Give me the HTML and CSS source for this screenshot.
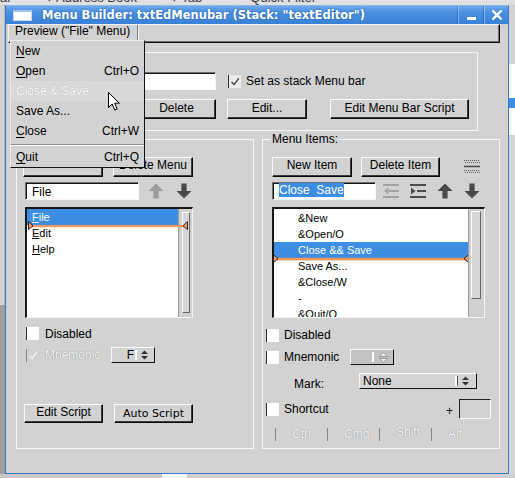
FILE: index.html
```html
<!DOCTYPE html>
<html lang="en">
<head>
<meta charset="utf-8">
<title>Menu Builder</title>
<link rel="stylesheet" href="styles.css">
</head>
<body>
<div class="desktop">

  <!-- application window sitting behind the dialog -->
  <div class="app-window">
    <div class="app-toolbar">
      <span class="t1">al</span>
      <span class="t2">&#9662; Address Book</span>
      <span class="t3">&#9662; Tab</span>
      <span class="t4">Quick Filter</span>
    </div>
    <div class="app-left">
      <div class="al-light"></div>
      <div class="al-dark"></div>
    </div>
    <div class="app-right">
      <div class="ar-gray"></div>
      <div class="ar-white"></div>
      <div class="ar-blue"></div>
      <div class="ar-white2"></div>
      <div class="ar-rest"></div>
    </div>
    <div class="app-bottom">
      <div class="ab-gray"></div>
      <div class="ab-white"></div>
      <div class="ab-rest"></div>
    </div>
  </div>

  <!-- Menu Builder dialog -->
  <div class="window">
    <div class="titlebar">
      <span class="win-icon"></span>
      <span class="win-title">Menu Builder: txtEdMenubar (Stack: "textEditor")</span>
      <span class="tb-btn tb-min"><svg width="9" height="18" viewBox="0 0 9 18"><rect x="0" y="11" width="9" height="3" fill="#fff"/></svg></span>
      <span class="tb-btn tb-close"><svg width="10" height="10" viewBox="0 0 10 10"><path d="M1.2 1.2L8.8 8.8M8.8 1.2L1.2 8.8" stroke="#fff" stroke-width="2.3" stroke-linecap="square"/></svg></span>
    </div>

    <div class="menubar"><span class="menubar-item">Preview ("File" Menu)</span></div>

    <div class="top-group">
      <div class="tg-row1">
        <span class="tg-label"></span>
        <span class="field tg-field"></span>
        <span class="check tg-check"><svg width="12" height="13" viewBox="0 0 12 13"><path d="M2.5 7L5 9.6L9.8 3.4" fill="none" stroke="#333" stroke-width="1.3"/></svg></span>
        <span class="check-label">Set as stack Menu bar</span>
      </div>
      <div class="tg-row2">
        <span class="btn btn-top b-new"></span>
        <span class="btn btn-top b-delete">Delete</span>
        <span class="btn btn-top b-edit">Edit...</span>
        <span class="btn btn-top b-script">Edit Menu Bar Script</span>
      </div>
    </div>

    <div class="columns">
      <!-- menus column -->
      <div class="group">
        <span class="group-label blank"></span>
        <div class="gl-btns">
          <span class="btn w80"></span>
          <span class="btn w80">Delete Menu</span>
        </div>
        <div class="gl-field-row">
          <span class="field gl-field">File</span>
          <svg class="icon gl-up" width="16" height="16" viewBox="0 0 16 16"><path d="M8 0.5L15.5 8H10.6V15.5H5.4V8H0.5Z" fill="#9c9c9c"/></svg>
          <svg class="icon gl-down" width="16" height="16" viewBox="0 0 16 16"><path d="M8 15.5L15.5 8H10.6V0.5H5.4V8H0.5Z" fill="#4a4a4a"/></svg>
        </div>
        <div class="list list-menus">
          <div class="list-body">
            <div class="lrow sel"><u>F</u>ile<svg class="drop-mark" width="160" height="9" viewBox="0 0 160 9"><rect x="3" y="4" width="154" height="2.2" fill="#f5975a"/><path d="M0.5 0.5L5 4.8L0.5 8.5Z" fill="#f5975a" stroke="#1c1c1c" stroke-width="0.9"/><path d="M159.5 0.5L155 4.8L159.5 8.5Z" fill="#f5975a" stroke="#1c1c1c" stroke-width="0.9"/></svg></div>
            <div class="lrow"><u>E</u>dit</div>
            <div class="lrow"><u>H</u>elp</div>
          </div>
          <div class="vscroll"><div class="thumb"></div></div>
        </div>
        <div class="crow gl-disabled">
          <span class="check"></span>
          <span class="check-label">Disabled</span>
        </div>
        <div class="crow gl-mnem">
          <span class="check off"><svg width="12" height="13" viewBox="0 0 12 13"><path d="M2.5 7L5 9.6L9.8 3.4" fill="none" stroke="#f4f4f4" stroke-width="1.2"/></svg></span>
          <span class="check-label disabled mn-label">Mnemonic</span>
          <span class="spin spin-f">
            <span class="spin-text">F</span><span class="caret"></span>
            <svg class="spin-arrows" width="7" height="10" viewBox="0 0 7 10"><path d="M3.5 0.5L7 4H0Z M0 6H7L3.5 9.5Z" fill="#333"/></svg>
          </span>
        </div>
        <div class="gl-scripts">
          <span class="btn w79 btn-short">Edit Script</span>
          <span class="btn w79 btn-short btn-dv">Auto Script</span>
        </div>
      </div>

      <!-- menu items column -->
      <div class="group">
        <span class="group-label">Menu Items:</span>
        <div class="gr-btns">
          <span class="btn w80">New Item</span>
          <span class="btn w79 b-delitem">Delete Item</span>
          <svg class="icon sep-icon" width="16" height="16" viewBox="0 0 16 16">
            <line x1="0" y1="1.5" x2="16" y2="1.5" stroke="#5a5a5a" stroke-dasharray="1 1"/>
            <line x1="1" y1="3.5" x2="16" y2="3.5" stroke="#5a5a5a" stroke-dasharray="1 1"/>
            <line x1="0" y1="7.5" x2="16" y2="7.5" stroke="#444" stroke-width="1.4"/>
            <line x1="0" y1="11.5" x2="16" y2="11.5" stroke="#5a5a5a" stroke-dasharray="1 1"/>
            <line x1="1" y1="13.5" x2="16" y2="13.5" stroke="#5a5a5a" stroke-dasharray="1 1"/>
          </svg>
        </div>
        <div class="gr-field-row">
          <span class="field gr-field"><span class="hl">Close  Save</span></span>
          <svg class="icon i-out" width="16" height="16" viewBox="0 0 16 16"><g fill="#a2a2a2"><rect x="0" y="1" width="16" height="2"/><rect x="6" y="7" width="10" height="2"/><path d="M5.5 4.5L1 8L5.5 11.5Z"/><rect x="0" y="13" width="16" height="2"/></g></svg>
          <svg class="icon i-in" width="16" height="16" viewBox="0 0 16 16"><g fill="#4a4a4a"><rect x="0" y="1" width="16" height="2"/><rect x="7" y="7" width="9" height="2"/><path d="M1 4.5L5.5 8L1 11.5Z"/><rect x="0" y="13" width="16" height="2"/></g></svg>
          <svg class="icon i-up" width="16" height="16" viewBox="0 0 16 16"><path d="M8 0.5L15.5 8H10.6V15.5H5.4V8H0.5Z" fill="#4a4a4a"/></svg>
          <svg class="icon i-down" width="16" height="16" viewBox="0 0 16 16"><path d="M8 15.5L15.5 8H10.6V0.5H5.4V8H0.5Z" fill="#4a4a4a"/></svg>
        </div>
        <div class="list list-items">
          <div class="list-body">
            <div class="lrow">&amp;New</div>
            <div class="lrow">&amp;Open/O</div>
            <div class="lrow sel">Close &amp;&amp; Save<svg class="drop-mark" width="196" height="9" viewBox="0 0 196 9"><rect x="3" y="3.8" width="190" height="2.6" fill="#f5975a"/><path d="M0.5 0.5L5 4.8L0.5 8.5Z" fill="#f5975a" stroke="#1c1c1c" stroke-width="0.9"/><path d="M195.5 0.5L191 4.8L195.5 8.5Z" fill="#f5975a" stroke="#1c1c1c" stroke-width="0.9"/></svg></div>
            <div class="lrow">Save As...</div>
            <div class="lrow">&amp;Close/W</div>
            <div class="lrow">-</div>
            <div class="lrow">&amp;Quit/Q</div>
          </div>
          <div class="vscroll"><div class="thumb"></div></div>
        </div>
        <div class="crow gr-disabled">
          <span class="check"></span>
          <span class="check-label">Disabled</span>
        </div>
        <div class="crow gr-mnem">
          <span class="check"></span>
          <span class="check-label mn-label">Mnemonic</span>
          <span class="spin spin-off">
            <span class="caret"></span>
            <svg class="spin-arrows" width="9" height="11" viewBox="0 0 9 11"><path d="M4.5 0.6L8.4 4.6H0.6Z M0.6 6.4H8.4L4.5 10.4Z" fill="#ededed" stroke="#8a8a8a" stroke-width="0.8"/></svg>
          </span>
        </div>
        <div class="crow gr-mark">
          <span class="mark-label">Mark:</span>
          <span class="dropdown">
            <span class="dd-text">None</span>
            <span class="caret dark"></span>
            <svg class="spin-arrows" width="7" height="10" viewBox="0 0 7 10"><path d="M3.5 0.5L7 4H0Z M0 6H7L3.5 9.5Z" fill="#333"/></svg>
          </span>
        </div>
        <div class="crow gr-short">
          <span class="check"></span>
          <span class="check-label sc-label">Shortcut</span>
          <span class="plus">+</span>
          <span class="sc-box"></span>
        </div>
        <div class="crow gr-mods">
          <span class="mod"><span class="check off"></span><span class="check-label disabled">Ctrl</span></span>
          <span class="mod"><span class="check off"></span><span class="check-label disabled">Cmd</span></span>
          <span class="mod"><span class="check off"></span><span class="check-label disabled lift">Shift</span></span>
          <span class="mod"><span class="check off"></span><span class="check-label disabled">Alt</span></span>
        </div>
      </div>
    </div>
  </div>

  <!-- open "Preview" menu -->
  <div class="popup">
    <div class="pm-item"><span><u>N</u>ew</span></div>
    <div class="pm-item"><span><u>O</u>pen</span><span>Ctrl+O</span></div>
    <div class="pm-item pm-hover pm-disabled"><span>Close &amp; Save</span></div>
    <div class="pm-item"><span>Save As...</span></div>
    <div class="pm-item"><span><u>C</u>lose</span><span>Ctrl+W</span></div>
    <div class="pm-sep"></div>
    <div class="pm-item"><span><u>Q</u>uit</span><span>Ctrl+Q</span></div>
  </div>

  <!-- mouse pointer -->
  <svg class="pointer" width="13" height="20" viewBox="0 0 13 20"><path d="M0.5 0.5V15.5L4.2 12L6.8 18L9.2 17L6.7 11.2H11.4Z" fill="#fff" stroke="#000" stroke-width="1" stroke-linejoin="miter"/></svg>
</div>
</body>
</html>
```

FILE: styles.css
```css
* { box-sizing: border-box; }

html, body {
  margin: 0;
  padding: 0;
}

body {
  background: #d4d4d4;
  font-family: "Liberation Sans", Arial, Helvetica, sans-serif;
  font-size: 12px;
  color: #000;
}

.desktop {
  position: relative;
  width: 515px;
  height: 478px;
  overflow: hidden;
}

/* ---------- background application ---------- */
.app-window {
  position: absolute;
  left: 0;
  top: 0;
  width: 515px;
  height: 478px;
  background: #d6d6d6;
}

.app-toolbar {
  display: flex;
  height: 5px;
  overflow: hidden;
  background: #e0e0e0;
  font-size: 13px;
  line-height: 13px;
  color: #3a3a3a;
  white-space: nowrap;
}
.app-toolbar span { margin-top: -9px; }
.t2 { margin-left: 36px; }
.t3 { margin-left: 34px; }
.t4 { margin-left: 48px; }

.app-left {
  position: absolute;
  left: 0;
  top: 5px;
  bottom: 0;
  width: 5px;
  display: flex;
  flex-direction: column;
}
.al-light { height: 300px; background: #d3d3d3; border-right: 1px solid #b5b5b5; }
.al-dark { flex: 1; background: #a29f9b; }

.app-right {
  position: absolute;
  left: 509px;
  top: 5px;
  bottom: 0;
  width: 6px;
  display: flex;
  flex-direction: column;
}
.ar-gray { height: 59px; background: #d2d2d2; }
.ar-white { height: 34px; background: #fdfdfd; }
.ar-blue { height: 10px; background: #3d8ee3; }
.ar-white2 { height: 27px; background: #fdfdfd; }
.ar-rest { flex: 1; background: #d4d4d4; }

.app-bottom {
  position: absolute;
  left: 0;
  top: 474px;
  width: 515px;
  height: 4px;
  display: flex;
}
.ab-gray { width: 162px; background: #c8c8c8; }
.ab-white { width: 25px; background: #fbfbfb; }
.ab-rest { flex: 1; background: #d0d0d0; }

/* ---------- dialog window ---------- */
.window {
  position: absolute;
  left: 5px;
  top: 5px;
  width: 504px;
  height: 469px;
  border: 1px solid #3a78cf;
  border-top-color: #8cb8ee;
  background: #d2d2d2;
  display: flex;
  flex-direction: column;
}

.titlebar {
  flex: none;
  height: 18px;
  display: flex;
  align-items: center;
  background: linear-gradient(#6ea8ec, #4a8fe0 35%, #3a80d7);
  color: #fff;
}
.win-icon {
  width: 19px;
  height: 11px;
  margin-left: 7px;
  background: #fff;
  border: 1px solid #c6daf4;
  border-top: 2px solid #a3c4ee;
}
.win-title {
  flex: 1;
  margin-left: 10px;
  font-family: "DejaVu Sans", sans-serif;
  font-weight: bold;
  font-size: 11.5px;
  line-height: 18px;
  white-space: nowrap;
  text-shadow: 0 0 2px rgba(10, 50, 120, 0.55);
}
.tb-btn {
  height: 18px;
  display: flex;
  align-items: center;
  justify-content: center;
  border-left: 1px solid rgba(255, 255, 255, 0.35);
  box-shadow: -1px 0 0 rgba(20, 60, 130, 0.35);
}
.tb-min { width: 26px; }
.tb-close { width: 24px; }

.menubar {
  flex: none;
  height: 19px;
  margin: 0 8px 0 2px;
  display: flex;
  border-top: 1px solid #f2f2f2;
  border-left: 1px solid #f2f2f2;
  border-right: 1px solid #0c0c0c;
  border-bottom: 1px solid #0c0c0c;
  box-shadow: inset -1px -1px 0 #6e6e6e;
}
.menubar-item {
  width: 128px;
  margin-left: 1px;
  padding-left: 5px;
  line-height: 12px;
  white-space: nowrap;
  border-right: 1px solid #7f7f7f;
  box-shadow: 1px 0 0 #f4f4f4;
}

/* ---------- common controls ---------- */
.btn {
  display: block;
  flex: none;
  height: 20px;
  background: #d2d2d2;
  border: 1px solid;
  border-color: #fafafa #0a0a0a #0a0a0a #fafafa;
  box-shadow: inset -1px -1px 0 #3c3c3c;
  text-align: center;
  line-height: 14px;
  white-space: nowrap;
}
.btn-top { line-height: 16px; }
.btn-short { height: 19px; }
.btn-dv {
  font-family: "DejaVu Sans", sans-serif;
  font-size: 11px;
  line-height: 17px;
}
.w80 { width: 80px; }
.w79 { width: 79px; }

.field {
  display: block;
  flex: none;
  height: 18px;
  background: #fff;
  border: 1px solid;
  border-color: #707070 #f8f8f8 #f8f8f8 #707070;
  box-shadow: inset 1px 1px 0 #141414;
  padding: 2px 6px 0;
  line-height: 15px;
  white-space: pre;
}

.check {
  flex: none;
  width: 13px;
  height: 13px;
  background: #fff;
  border-left: 1px solid #303030;
  display: flex;
  align-items: center;
  justify-content: center;
}
.check.off {
  background: transparent;
  border-left-color: #858585;
}

.check-label {
  margin-left: 6px;
  line-height: 14px;
  white-space: nowrap;
}
.disabled {
  color: #f6f6f6;
  text-shadow: 0 0 1px #8e8e8e, 0 0 1px #a0a0a0;
}

.crow {
  display: flex;
  align-items: center;
  flex: none;
}

.icon { flex: none; display: block; }

.caret {
  width: 2px;
  height: 10px;
  background: #fff;
  margin-left: 1px;
}
.caret.dark { background: #fff; box-shadow: 1px 0 0 #555; }

.spin {
  display: flex;
  align-items: center;
  justify-content: flex-end;
  flex: none;
  width: 44px;
  height: 16px;
  border: 1px solid;
  border-color: #fafafa #111 #111 #fafafa;
  padding-right: 6px;
  background: #d2d2d2;
}
.spin-text { line-height: 14px; }
.spin-arrows { margin-left: 4px; flex: none; }
.spin-off {
  background: #c3c3c3;
  padding-right: 5px;
}
.spin-off .spin-arrows { margin-left: 5px; }

/* ---------- top group ---------- */
.top-group {
  flex: none;
  width: 462px;
  height: 79px;
  margin: 9px 0 0 10px;
  border: 1px solid #f6f6f6;
}
.tg-row1 {
  display: flex;
  align-items: center;
  height: 18px;
  margin-top: 19px;
}
.tg-label { margin-left: 6px; width: 72px; }
.tg-field { width: 121px; }
.tg-check { margin-left: 12px; background: #ececec; }
.tg-row1 .check-label { margin-left: 5px; }

.tg-row2 {
  display: flex;
  margin-top: 9px;
}
.b-new { margin-left: 30px; width: 79px; }
.b-delete { margin-left: 11px; width: 79px; }
.b-edit { margin-left: 11px; width: 80px; }
.b-script { margin-left: 23px; width: 139px; }

/* ---------- lower columns ---------- */
.columns {
  flex: none;
  display: flex;
  gap: 8px;
  margin: 8px 0 0 10px;
}
.group {
  width: 238px;
  height: 310px;
  border: 1px solid #f6f6f6;
  display: flex;
  flex-direction: column;
}
.group-label {
  align-self: flex-start;
  margin: -8px 0 0 7px;
  padding: 0 2px;
  background: #d2d2d2;
  line-height: 14px;
}
.group-label.blank {
  width: 44px;
  height: 14px;
}

.gl-btns {
  display: flex;
  gap: 10px;
  margin-top: 11px;
  padding-left: 6px;
}
.gl-field-row {
  display: flex;
  align-items: center;
  height: 18px;
  margin-top: 5px;
  padding-left: 8px;
}
.gl-field { width: 114px; }
.gl-up { margin-left: 9px; }
.gl-down { margin-left: 12px; }

.list {
  display: flex;
  flex: none;
  height: 111px;
  margin-top: 7px;
  border-style: solid;
  border-width: 2px 1px 1px 2px;
  border-color: #161616 #f4f4f4 #f4f4f4 #161616;
}
.list-body {
  flex: 1;
  background: #fff;
  font-size: 11px;
}
.lrow {
  position: relative;
  height: 16px;
  line-height: 16px;
  white-space: pre;
}
.lrow u { text-underline-offset: 1px; }
.lrow.sel {
  background: #3d8ee3;
  color: #fff;
}
.drop-mark {
  position: absolute;
  top: 12px;
  display: block;
}
.vscroll {
  flex: none;
  background: #d0d0d0;
  border-left: 1px solid #9a9a9a;
}
.thumb {
  background: #d6d6d6;
  border: 1px solid;
  border-color: #fbfbfb #686868 #686868 #fbfbfb;
}

.list-menus { width: 168px; margin-left: 8px; }
.list-menus .lrow { padding-left: 5px; }
.list-menus .drop-mark { left: 1px; }
.list-menus .vscroll { width: 14px; }
.list-menus .thumb { width: 8px; height: 101px; margin: 3px 0 0 3px; }

.list-items { width: 213px; margin-left: 9px; }
.list-items .list-body { padding-top: 1px; overflow: hidden; }
.list-items .lrow { padding-left: 24px; }
.list-items .drop-mark { left: -1px; }
.list-items .vscroll { width: 16px; }
.list-items .thumb { width: 10px; height: 88px; margin: 2px 0 0 2px; }

.gl-disabled { height: 13px; margin: 9px 0 0 9px; }
.gl-mnem { height: 16px; margin: 7px 0 0 9px; }
.mn-label { width: 66px; }
.gl-scripts {
  display: flex;
  gap: 11px;
  margin: 41px 0 0 7px;
}

.gr-btns {
  display: flex;
  align-items: center;
  margin-top: 11px;
  padding-left: 9px;
}
.b-delitem { margin-left: 9px; }
.sep-icon { margin-left: 24px; }

.gr-field-row {
  display: flex;
  align-items: center;
  height: 18px;
  margin-top: 5px;
  padding-left: 9px;
}
.gr-field { width: 104px; padding-top: 0; padding-left: 6px; }
.hl { background: #3d8ee3; color: #fff; }
.i-out { margin-left: 7px; }
.i-in, .i-up, .i-down { margin-left: 11px; }

.gr-disabled { height: 14px; margin: 10px 0 0 3px; }
.gr-disabled .check-label, .gr-mnem .check-label, .gr-short .check-label { margin-left: 5px; }
.gr-mnem { height: 16px; margin: 7px 0 0 3px; }

.gr-mark {
  height: 17px;
  align-items: flex-start;
  margin: 8px 0 0 31px;
}
.mark-label {
  width: 65px;
  margin-top: 4px;
  line-height: 14px;
}
.dropdown {
  display: flex;
  align-items: center;
  width: 118px;
  height: 16px;
  padding: 0 7px 0 3px;
  background: #d4d4d4;
  border: 1px solid;
  border-color: #fafafa #111 #111 #fafafa;
}
.dd-text {
  flex: 1;
  line-height: 14px;
  align-self: flex-start;
}
.dropdown .spin-arrows { margin-left: 5px; }

.gr-short {
  height: 20px;
  margin: 9px 8px 0 3px;
}
.sc-label { flex: 1; }
.plus { line-height: 14px; margin-top: 4px; }
.sc-box {
  flex: none;
  width: 32px;
  height: 20px;
  margin-left: 6px;
  border: 1px solid;
  border-color: #222 #fafafa #fafafa #222;
}

.gr-mods {
  height: 14px;
  margin: 8px 0 0 12px;
}
.mod {
  display: flex;
  align-items: center;
  width: 52px;
}
.mod .check-label { margin-left: 4px; }
.lift { margin-bottom: 4px; }

/* ---------- open menu ---------- */
.popup {
  position: absolute;
  left: 10px;
  top: 40px;
  width: 135px;
  background: #d2d2d2;
  border: 1px solid;
  border-color: #ececec #111 #111 #ececec;
}
.pm-item {
  display: flex;
  justify-content: space-between;
  height: 20px;
  line-height: 20px;
  padding: 0 5px;
  white-space: nowrap;
}
.pm-item u { text-underline-offset: 2px; }
.pm-hover { background: #d9d9d9; }
.pm-disabled {
  color: #fbfbfb;
  text-shadow: 0 0 1px #9a9a9a;
}
.pm-sep {
  height: 6px;
  background: linear-gradient(#d2d2d2 3px, #8c8c8c 3px, #8c8c8c 4px, #fbfbfb 4px, #fbfbfb 5px, #d2d2d2 5px);
}

.pointer {
  position: absolute;
  left: 108px;
  top: 92px;
}
```
